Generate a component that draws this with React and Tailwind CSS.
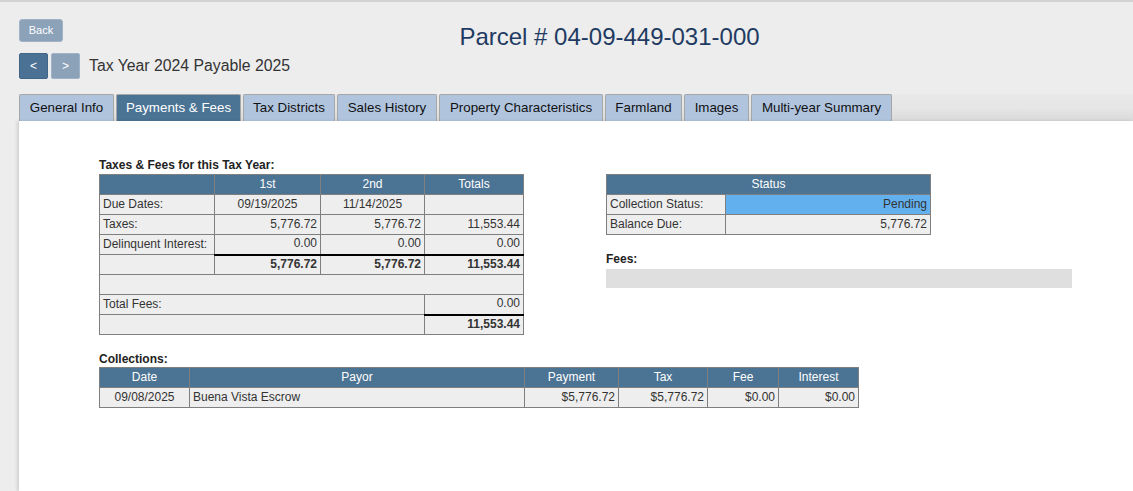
import React from "react";

const th = "h-[20px] p-0 px-[3px] pb-[1px] border border-[#7f7f7f] bg-[#4b7394] text-white font-normal text-center leading-[17px]";
const td = "h-[20px] p-0 px-[3px] pb-[1px] border border-[#7f7f7f] leading-[17px]";

const tabs = [
  { label: "General Info", w: "w-[95px]" },
  { label: "Payments & Fees", w: "w-[125px]" },
  { label: "Tax Districts", w: "w-[92px]" },
  { label: "Sales History", w: "w-[100px]" },
  { label: "Property Characteristics", w: "w-[164px]" },
  { label: "Farmland", w: "w-[77px]" },
  { label: "Images", w: "w-[65px]" },
  { label: "Multi-year Summary", w: "w-[141px]" },
];

const collections = [
  {
    date: "09/08/2025",
    payor: "Buena Vista Escrow",
    payment: "$5,776.72",
    tax: "$5,776.72",
    fee: "$0.00",
    interest: "$0.00",
  },
];

const App = () => {
  return (
    <div className="min-h-[491px] bg-[#ededed] border-t-2 border-[#d2d2d2] font-['Liberation_Sans',Arial,sans-serif] text-[#222] flex flex-col">
      {/* Header */}
      <div className="px-[19px] pt-[17px]">
        <div className="flex items-start h-[23px]">
          <button className="w-[44px] h-[23px] rounded-[3px] bg-[#8ba2b9] border border-[#9fb2c6] text-white text-[11px] leading-[21px] text-center">
            Back
          </button>
          <h1 className="flex-1 text-center pl-[42px] mt-[4px] text-[24px] leading-[28px] text-[#1f3b62] font-normal">
            Parcel # 04-09-449-031-000
          </h1>
        </div>
        <div className="flex items-center mt-[11px]">
          <button className="w-[29px] h-[26px] rounded-[2px] bg-[#4b7194] border border-[#3f6588] text-white text-[12px] leading-[24px] text-center">
            &lt;
          </button>
          <button className="ml-[3px] w-[29px] h-[26px] rounded-[2px] bg-[#8ba2b9] border border-[#9fb2c6] text-white text-[12px] leading-[24px] text-center">
            &gt;
          </button>
          <span className="ml-[9px] text-[15.8px] text-[#333]">Tax Year 2024 Payable 2025</span>
        </div>
      </div>

      {/* Tabs */}
      <div className="ml-[19px] mt-[15px] flex gap-[2px] h-[27px] bg-gradient-to-b from-[#e9e9e9] via-[#e6e6e6] to-[#d9d9d9]">
        {tabs.map((t) => (
          <div
            key={t.label}
            className={
              t.label === "Payments & Fees"
                ? t.w + " h-[27px] border border-b-0 border-[#a7a7a7] rounded-t-[2px] bg-[#4b7394] text-white text-[13.33px] leading-[26px] text-center whitespace-nowrap"
                : t.w + " h-[27px] border border-b-0 border-[#a7a7a7] rounded-t-[2px] bg-[#b0c4de] text-[#111] text-[13.33px] leading-[26px] text-center whitespace-nowrap"
            }
          >
            {t.label}
          </div>
        ))}
      </div>

      {/* Panel */}
      <div className="ml-[19px] flex-1 bg-white shadow-[-2px_0_3px_rgba(0,0,0,0.12)] pl-[80px] pt-[37px] pb-[40px] text-[12px]">
        <div className="flex items-start">
          {/* Taxes & Fees */}
          <div>
            <div className="font-bold leading-[14px] mb-[2px] text-[#222]">Taxes &amp; Fees for this Tax Year:</div>
            <table className="table-fixed border-collapse w-[424px] bg-[#eeeeee] text-[#333]">
              <colgroup>
                <col className="w-[115px]" />
                <col className="w-[106px]" />
                <col className="w-[104px]" />
                <col className="w-[99px]" />
              </colgroup>
              <thead>
                <tr>
                  <th className={th}></th>
                  <th className={th}>1st</th>
                  <th className={th}>2nd</th>
                  <th className={th}>Totals</th>
                </tr>
              </thead>
              <tbody>
                <tr>
                  <td className={td}>Due Dates:</td>
                  <td className={td + " text-center"}>09/19/2025</td>
                  <td className={td + " text-center"}>11/14/2025</td>
                  <td className={td}></td>
                </tr>
                <tr>
                  <td className={td}>Taxes:</td>
                  <td className={td + " text-right"}>5,776.72</td>
                  <td className={td + " text-right"}>5,776.72</td>
                  <td className={td + " text-right"}>11,553.44</td>
                </tr>
                <tr>
                  <td className={td}>Delinquent Interest:</td>
                  <td className={td + " text-right"}>0.00</td>
                  <td className={td + " text-right"}>0.00</td>
                  <td className={td + " text-right"}>0.00</td>
                </tr>
                <tr>
                  <td className={td}></td>
                  <td className={td + " text-right font-bold border-t-2 border-t-black"}>5,776.72</td>
                  <td className={td + " text-right font-bold border-t-2 border-t-black"}>5,776.72</td>
                  <td className={td + " text-right font-bold border-t-2 border-t-black"}>11,553.44</td>
                </tr>
                <tr>
                  <td className={td} colSpan={4}></td>
                </tr>
                <tr>
                  <td className={td} colSpan={3}>Total Fees:</td>
                  <td className={td + " text-right"}>0.00</td>
                </tr>
                <tr>
                  <td className={td} colSpan={3}></td>
                  <td className={td + " text-right font-bold border-t-2 border-t-black"}>11,553.44</td>
                </tr>
              </tbody>
            </table>
          </div>

          {/* Status + Fees */}
          <div className="ml-[82px] pt-[16px]">
            <table className="table-fixed border-collapse w-[324px] bg-[#eeeeee] text-[#333]">
              <colgroup>
                <col className="w-[119px]" />
                <col className="w-[205px]" />
              </colgroup>
              <thead>
                <tr>
                  <th className={th} colSpan={2}>Status</th>
                </tr>
              </thead>
              <tbody>
                <tr>
                  <td className={td}>Collection Status:</td>
                  <td className={td + " text-right bg-[#63b0ef]"}>Pending</td>
                </tr>
                <tr>
                  <td className={td}>Balance Due:</td>
                  <td className={td + " text-right"}>5,776.72</td>
                </tr>
              </tbody>
            </table>
            <div className="font-bold leading-[14px] mt-[17px] mb-[3px] text-[#222]">Fees:</div>
            <div className="w-[466px] h-[19px] bg-[#dfdfdf]"></div>
          </div>
        </div>

        {/* Collections */}
        <div className="mt-[17px]">
          <div className="font-bold leading-[14px] mb-[1px] text-[#222]">Collections:</div>
          <table className="table-fixed border-collapse w-[759px] bg-[#eeeeee] text-[#333]">
            <colgroup>
              <col className="w-[90px]" />
              <col className="w-[335px]" />
              <col className="w-[94px]" />
              <col className="w-[89px]" />
              <col className="w-[71px]" />
              <col className="w-[80px]" />
            </colgroup>
            <thead>
              <tr>
                <th className={th}>Date</th>
                <th className={th}>Payor</th>
                <th className={th}>Payment</th>
                <th className={th}>Tax</th>
                <th className={th}>Fee</th>
                <th className={th}>Interest</th>
              </tr>
            </thead>
            <tbody>
              {collections.map((c) => (
                <tr key={c.date + c.payor}>
                  <td className={td + " text-center"}>{c.date}</td>
                  <td className={td}>{c.payor}</td>
                  <td className={td + " text-right"}>{c.payment}</td>
                  <td className={td + " text-right"}>{c.tax}</td>
                  <td className={td + " text-right"}>{c.fee}</td>
                  <td className={td + " text-right"}>{c.interest}</td>
                </tr>
              ))}
            </tbody>
          </table>
        </div>
      </div>
    </div>
  );
};

export default App;
